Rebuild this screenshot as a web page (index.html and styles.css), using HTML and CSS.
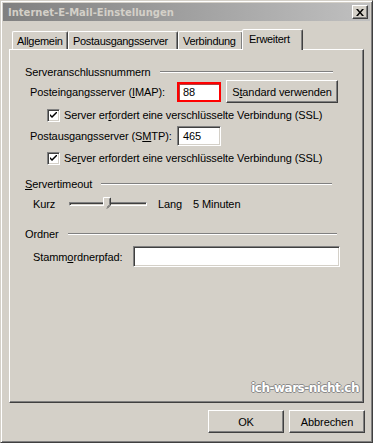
FILE: index.html
```html
<!DOCTYPE html>
<html lang="de">
<head>
    <meta charset="UTF-8">
    <title>Internet-E-Mail-Einstellungen</title>
    <link rel="stylesheet" href="styles.css">
</head>
<body>
    <div class="window">
        <!-- Title bar -->
        <div class="titlebar">
            <span class="title">Internet-E-Mail-Einstellungen</span>
            <span class="close-btn">
                <svg width="8" height="7" viewBox="0 0 8 7"><path d="M0 0h2l2 2.5L6 0h2L5 3.5 8 7H6L4 4.5 2 7H0l3-3.5z" fill="#000"/></svg>
            </span>
        </div>

        <!-- Tabs -->
        <div class="tabs">
            <div class="tab tab-general">Allgemein</div>
            <div class="tab tab-out">Postausgangsserver</div>
            <div class="tab tab-conn">Verbindung</div>
            <div class="tab tab-adv active">Erweitert</div>
        </div>

        <div class="panel">
            <div class="group-head first"><span>Serveranschlussnummern</span><i class="rule"></i></div>

            <div class="row row-imap">
                <label class="lbl lbl-port">Posteingangsserver (<u>I</u>MAP):</label>
                <span class="field field-port marked">88</span>
                <span class="btn btn-std">S<u>t</u>andard verwenden</span>
            </div>
            <div class="row check-row">
                <span class="checkbox"><svg width="7" height="7" viewBox="0 0 7 7"><path d="M0 2l2 2 5-5v2L2 6 0 4z" fill="#000"/></svg></span>
                <span>Server er<u>f</u>ordert eine verschlüsselte Verbindung (SSL)</span>
            </div>

            <div class="row row-smtp">
                <label class="lbl lbl-port">Postausgangsserver (S<u>M</u>TP):</label>
                <span class="field field-port">465</span>
            </div>
            <div class="row check-row check-two">
                <span class="checkbox"><svg width="7" height="7" viewBox="0 0 7 7"><path d="M0 2l2 2 5-5v2L2 6 0 4z" fill="#000"/></svg></span>
                <span>Se<u>r</u>ver erfordert eine verschlüsselte Verbindung (SSL)</span>
            </div>

            <div class="group-head second"><span><u>S</u>ervertimeout</span><i class="rule"></i></div>
            <div class="row row-slider">
                <span class="lbl-kurz">Kurz</span>
                <span class="slider">
                    <span class="track"></span>
                    <svg class="thumb" width="9" height="12" viewBox="0 0 9 12">
                        <path d="M0.5 0.5h7v7.5l-3.5 3.5-3.5-3.5z" fill="#d4d0c8" stroke="none"/>
                        <path d="M7.5 0.5v7.5l-3.5 3.5" fill="none" stroke="#404040"/>
                        <path d="M0.5 8V0.5h7" fill="none" stroke="#fff"/>
                        <path d="M6.5 1.5v6.2l-2.5 2.5" fill="none" stroke="#808080"/>
                    </svg>
                </span>
                <span class="lbl-lang">Lang</span>
                <span>5 Minuten</span>
            </div>

            <div class="group-head third"><span>Ordner</span><i class="rule"></i></div>
            <div class="row row-folder">
                <label class="lbl lbl-folder">Stamm<u>o</u>rdnerpfad:</label>
                <span class="field field-folder"></span>
            </div>

            <div class="watermark">ich-wars-nicht.ch</div>
        </div>

        <div class="actions">
            <span class="btn btn-action">OK</span>
            <span class="btn btn-action">Abbrechen</span>
        </div>
    </div>
</body>
</html>
```

FILE: styles.css
```css
/* Global */
body {
    margin: 0;
    background: #d4d0c8;
    font-family: "Liberation Sans", Arial, sans-serif;
    font-size: 11px;
    letter-spacing: -0.1px;
    color: #000;
}

u {
    text-decoration: underline;
    text-underline-offset: 1px;
}

/* Window frame */
.window {
    width: 373px;
    height: 443px;
    box-sizing: border-box;
    border: 1px solid;
    border-color: #d4d0c8 #404040 #404040 #d4d0c8;
    box-shadow: inset 1px 1px #fff, inset -1px -1px #808080;
    padding: 2px;
    display: flex;
    flex-direction: column;
}

/* Title bar */
.titlebar {
    height: 18px;
    flex: none;
    display: flex;
    align-items: center;
    justify-content: space-between;
    padding: 0 2px 0 5px;
    background: linear-gradient(to right, #808080, #c0c0c0);
}

.title {
    font-family: "DejaVu Sans", Verdana, sans-serif;
    font-weight: bold;
    font-size: 10px;
    letter-spacing: 0;
    color: #d4d0c8;
}

.close-btn {
    width: 16px;
    height: 14px;
    box-sizing: border-box;
    background: #d4d0c8;
    border: 1px solid;
    border-color: #fff #404040 #404040 #fff;
    box-shadow: inset -1px -1px #808080;
    display: flex;
    align-items: center;
    justify-content: center;
}

/* Tabs */
.tabs {
    display: flex;
    align-items: flex-end;
    height: 20px;
    margin: 8px 0 0 9px;
    position: relative;
    z-index: 1;
}

.tab {
    height: 18px;
    box-sizing: border-box;
    padding: 3px 0 0 4px;
    border: 1px solid;
    border-bottom: none;
    border-color: #fff #404040 transparent #fff;
    border-radius: 2px 2px 0 0;
    box-shadow: inset -1px 0 #808080;
    white-space: nowrap;
    letter-spacing: -0.3px;
}

.tab-general { width: 56px; }
.tab-out { width: 110px; }
.tab-conn { width: 65px; }
.tab-adv { width: 61px; }

.tab.active {
    height: 21px;
    margin-bottom: -1px;
    margin-left: -1px;
    padding: 3px 0 0 6px;
    background: #d4d0c8;
}

/* Panel */
.panel {
    width: 355px;
    height: 354px;
    margin: 0 0 0 6px;
    box-sizing: border-box;
    border: 1px solid;
    border-color: #fff #404040 #404040 #fff;
    box-shadow: inset -1px -1px #808080;
    padding: 15px 0 0 15px;
    display: flex;
    flex-direction: column;
}

.group-head {
    height: 13px;
    display: flex;
    align-items: center;
    gap: 9px;
}

.group-head.first { width: 308px; }
.group-head.second { width: 307px; margin-top: 12px; }
.group-head.third { width: 312px; margin-top: 15px; }

.rule {
    flex: 1;
    height: 0;
    border-top: 1px solid #808080;
    border-bottom: 1px solid #fff;
}

.row {
    display: flex;
    align-items: center;
    padding-left: 5px;
}

.row-imap { height: 24px; margin-top: 2px; }
.row-smtp { height: 20px; margin-top: 4px; }
.row-slider { height: 16px; margin-top: 6px; padding-left: 8px; }
.row-folder { height: 21px; margin-top: 6px; padding-left: 8px; }

.lbl-port { width: 147px; }
.lbl-folder { width: 100px; }

/* Sunken fields */
.field {
    height: 20px;
    box-sizing: border-box;
    background: #fff;
    border: 1px solid;
    border-color: #808080 #fff #fff #808080;
    box-shadow: inset 1px 1px #404040, inset -1px -1px #d4d0c8;
    padding: 0 5px;
    line-height: 18px;
}

.field-port { width: 44px; }
.field-folder { width: 207px; height: 21px; }

.field.marked {
    border: 2px solid #f00;
    box-shadow: inset 1px 1px #b04040;
    padding-left: 4px;
    line-height: 16px;
}

/* Buttons */
.btn {
    height: 23px;
    box-sizing: border-box;
    border: 1px solid;
    border-color: #fff #404040 #404040 #fff;
    box-shadow: inset -1px -1px #808080;
    display: flex;
    align-items: center;
    justify-content: center;
    background: #d4d0c8;
}

.btn-std {
    width: 112px;
    margin-left: 5px;
    align-self: flex-start;
}

/* Checkbox rows */
.check-row {
    height: 14px;
    margin-top: 4px;
    padding-left: 22px;
    gap: 4px;
}

.check-two { margin-top: 5px; }

.checkbox {
    width: 13px;
    height: 13px;
    box-sizing: border-box;
    background: #fff;
    border: 1px solid;
    border-color: #808080 #fff #fff #808080;
    box-shadow: inset 1px 1px #404040, inset -1px -1px #d4d0c8;
    display: flex;
    align-items: center;
    justify-content: center;
}

/* Slider */
.lbl-kurz { width: 36px; }

.slider {
    width: 78px;
    height: 16px;
    position: relative;
    display: flex;
    align-items: center;
}

.track {
    width: 100%;
    height: 4px;
    box-sizing: border-box;
    border: 1px solid;
    border-color: #808080 #fff #fff #808080;
    box-shadow: inset 1px 1px #404040;
}

.thumb {
    position: absolute;
    left: 34px;
    top: 1px;
}

.lbl-lang { margin-left: 11px; width: 35px; }

/* Watermark */
.watermark {
    margin: auto 4px 7px 0;
    align-self: flex-end;
    font-family: "DejaVu Sans", Verdana, sans-serif;
    font-weight: bold;
    font-size: 12px;
    letter-spacing: -0.5px;
    color: #fff;
    text-shadow: 1px 0 #8a8a8a, -1px 0 #8a8a8a, 0 1px #8a8a8a, 0 -1px #8a8a8a;
}

/* Bottom buttons */
.actions {
    display: flex;
    justify-content: flex-end;
    gap: 5px;
    margin: 7px 5px 0 0;
}

.btn-action { width: 76px; }
```
